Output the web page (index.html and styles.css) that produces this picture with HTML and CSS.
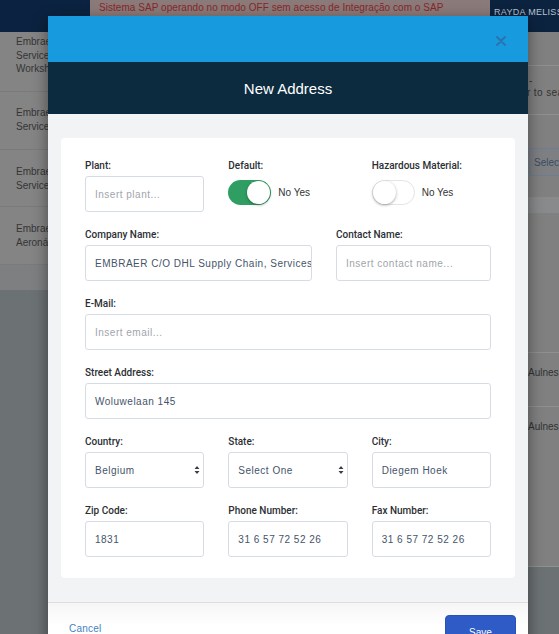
FILE: index.html
```html
<!DOCTYPE html>
<html lang="en">
<head>
<meta charset="utf-8">
<title>New Address</title>
<link rel="stylesheet" href="styles.css">
</head>
<body>
<div class="page">
  <header class="topbar">
    <div class="brand"></div>
    <div class="alert">Sistema SAP operando no modo OFF sem acesso de Integração com o SAP</div>
    <div class="user">RAYDA MELISSA</div>
  </header>
  <div class="content">
    <div class="list">
      <div class="lrow lrow-1">Embraer<br>Services<br>Workshop</div>
      <div class="lrow lrow-2">Embraer<br>Services</div>
      <div class="lrow lrow-3">Embraer<br>Services</div>
      <div class="lrow lrow-4">Embraer<br>Aeronáutica</div>
      <div class="lrow lrow-5"></div>
    </div>
    <div class="side">
      <div class="srow srow-1"></div>
      <div class="srow srow-2"><span class="dash">-</span><span>or to search</span></div>
      <div class="srow srow-3"><span class="selbox">Select</span></div>
      <div class="sband"></div>
      <div class="srow srow-a"></div>
      <div class="srow srow-b">Aulnes</div>
      <div class="srow srow-c">Aulnes</div>
    </div>
  </div>
</div>

<div class="modal">
  <div class="m-top">
    <svg class="close" width="10" height="10" viewBox="0 0 10 10"><path d="M1 1 L9 9 M9 1 L1 9" stroke="#2a74ae" stroke-width="1.9" stroke-linecap="round"/></svg>
  </div>
  <div class="m-title">New Address</div>
  <div class="m-body">
    <div class="card">
      <div class="frow cols3">
        <div class="field">
          <div class="label">Plant:</div>
          <div class="input ph">Insert plant...</div>
        </div>
        <div class="field">
          <div class="label">Default:</div>
          <div class="toggle-line">
            <span class="toggle on"><span class="knob"></span></span>
            <span class="yn">No Yes</span>
          </div>
        </div>
        <div class="field">
          <div class="label">Hazardous Material:</div>
          <div class="toggle-line">
            <span class="toggle off"><span class="knob"></span></span>
            <span class="yn">No Yes</span>
          </div>
        </div>
      </div>
      <div class="frow cols2">
        <div class="field">
          <div class="label">Company Name:</div>
          <div class="input">EMBRAER C/O DHL Supply Chain, Services</div>
        </div>
        <div class="field">
          <div class="label">Contact Name:</div>
          <div class="input ph">Insert contact name...</div>
        </div>
      </div>
      <div class="frow">
        <div class="field">
          <div class="label">E-Mail:</div>
          <div class="input ph">Insert email...</div>
        </div>
      </div>
      <div class="frow">
        <div class="field">
          <div class="label">Street Address:</div>
          <div class="input">Woluwelaan 145</div>
        </div>
      </div>
      <div class="frow cols3">
        <div class="field">
          <div class="label">Country:</div>
          <div class="input select">Belgium<svg class="arrows" width="6" height="10" viewBox="0 0 6 10"><path d="M3 1 L5.5 4 H0.5 Z M3 9 L0.5 6 H5.5 Z" fill="#3a3f46"/></svg></div>
        </div>
        <div class="field">
          <div class="label">State:</div>
          <div class="input select">Select One<svg class="arrows" width="6" height="10" viewBox="0 0 6 10"><path d="M3 1 L5.5 4 H0.5 Z M3 9 L0.5 6 H5.5 Z" fill="#3a3f46"/></svg></div>
        </div>
        <div class="field">
          <div class="label">City:</div>
          <div class="input">Diegem Hoek</div>
        </div>
      </div>
      <div class="frow cols3">
        <div class="field">
          <div class="label">Zip Code:</div>
          <div class="input">1831</div>
        </div>
        <div class="field">
          <div class="label">Phone Number:</div>
          <div class="input">31 6 57 72 52 26</div>
        </div>
        <div class="field">
          <div class="label">Fax Number:</div>
          <div class="input">31 6 57 72 52 26</div>
        </div>
      </div>
    </div>
  </div>
  <div class="m-foot">
    <a class="cancel">Cancel</a>
    <button class="save">Save</button>
  </div>
</div>
</body>
</html>
```

FILE: styles.css
```css
* { box-sizing: border-box; }
html, body { margin: 0; padding: 0; }
body {
  width: 559px;
  height: 634px;
  overflow: hidden;
  font-family: "Liberation Sans", Arial, sans-serif;
  background: #6c7174;
  position: relative;
}

/* background page (already dimmed by the overlay) */
.page { width: 559px; }
.topbar { display: flex; height: 32px; }
.brand { width: 90px; background: #0b2340; }
.alert {
  width: 400px;
  height: 16px;
  background: #8b7a7a;
  color: #8a2727;
  font-size: 10px;
  letter-spacing: 0.05px;
  padding: 2px 0 0 9px;
  white-space: nowrap;
  overflow: hidden;
}
.user {
  flex: 1;
  background: #0c2340;
  color: #b9c3d0;
  font-size: 9px;
  letter-spacing: 0.3px;
  padding: 7px 0 0 4px;
  white-space: nowrap;
  overflow: hidden;
}
.content { display: flex; }
.list { width: 528px; }
.lrow {
  background: #848484;
  color: #353535;
  font-size: 10px;
  line-height: 13.5px;
  padding-left: 16px;
  border-bottom: 1px solid #7a7a7a;
  white-space: nowrap;
}
.lrow-1 { height: 60px; padding-top: 3px; }
.lrow-2 { height: 58px; padding-top: 14px; }
.lrow-3 { height: 57px; padding-top: 15px; }
.lrow-4 { height: 58px; padding-top: 15px; }
.lrow-5 { height: 25px; background: #7e7f80; border-bottom: 0; }

.side { flex: 1; overflow: hidden; white-space: nowrap; font-size: 10px; color: #333; }
.srow { background: #808080; border-bottom: 1px solid #8f9090; }
.srow-1 { height: 34px; }
.srow-2 { height: 49px; padding: 9px 0 0 0; display: flex; flex-direction: column; line-height: 12px; }
.srow-2 .dash { padding-left: 1px; }
.srow-2 span:last-child { margin-left: -7px; letter-spacing: .4px; }
.srow-3 { height: 82px; padding-top: 33px; border-bottom: 0; }
.selbox {
  display: inline-block;
  margin-left: 1px;
  padding: 8px 4px 7px 4px;
  border: 1px solid #6d7d95;
  border-radius: 2px;
  color: #3c4d66;
  background: #7e7f82;
}
.sband { height: 16px; background: #898a8b; }
.srow-a { height: 140px; }
.srow-b { height: 54px; padding-top: 14px; }
.srow-c { height: 160px; padding-top: 14px; }

/* modal */
.modal {
  position: absolute;
  left: 48px;
  top: 16px;
  width: 480px;
  display: flex;
  flex-direction: column;
  box-shadow: 0 4px 14px rgba(0,0,0,.45);
  background: #f2f3f5;
}
.m-top {
  height: 46px;
  background: #189ade;
  display: flex;
  justify-content: flex-end;
  align-items: center;
  padding: 4px 22px 0 0;
}
.m-title {
  height: 52px;
  background: #0c2b3f;
  color: #fff;
  font-size: 15px;
  display: flex;
  align-items: center;
  justify-content: center;
}
.m-body { padding: 24px 13px 24px 13px; background: #f2f3f5; }
.card {
  background: #fff;
  border-radius: 4px;
  padding: 21px 24px;
  display: flex;
  flex-direction: column;
  gap: 16px;
}
.frow { display: grid; grid-template-columns: 1fr; }
.cols3 { grid-template-columns: repeat(3, 1fr); column-gap: 24px; }
.cols2 { grid-template-columns: 227px 1fr; column-gap: 24px; }
.label {
  font-family: Roboto, "Liberation Sans", sans-serif;
  font-weight: 500;
  font-size: 10px;
  line-height: 14px;
  color: #2b2f34;
  margin-bottom: 3px;
  white-space: nowrap;
}
.input {
  height: 36px;
  border: 1px solid #d6dce6;
  border-radius: 3px;
  padding: 0 9px;
  display: flex;
  align-items: center;
  font-size: 10px;
  letter-spacing: 0.5px;
  color: #45546a;
  white-space: nowrap;
  overflow: hidden;
}
.input.ph { color: #a1a5ab; }
.select { justify-content: space-between; padding-right: 3px; }
.arrows { flex: none; }

.toggle-line { height: 32px; display: flex; align-items: center; gap: 7px; }
.toggle {
  width: 43px;
  height: 25px;
  border-radius: 13px;
  display: flex;
  align-items: center;
  padding: 1px;
}
.toggle.on { background: #2f9e62; justify-content: flex-end; }
.toggle.off { background: #fff; border: 1px solid #e4e4e4; padding: 0; }
.knob {
  width: 23px;
  height: 23px;
  border-radius: 50%;
  background: #fff;
  box-shadow: 0 1px 3px rgba(0,0,0,.35);
}
.yn { font-size: 10px; color: #333; }

.m-foot {
  border-top: 1px solid #dcdee2;
  background: linear-gradient(#f5f5f6, #ffffff 22px);
  height: 60px;
  display: flex;
  justify-content: space-between;
  align-items: flex-start;
  padding: 12px 12px 0 21px;
}
.cancel {
  font-size: 10px;
  color: #3f83c2;
  margin-top: 8px;
  letter-spacing: 0.2px;
}
.save {
  width: 71px;
  height: 34px;
  background: #2f5bc7;
  border: 1px solid #2a51b4;
  border-radius: 4px;
  color: #fff;
  font-family: "Liberation Sans", Arial, sans-serif;
  font-size: 10px;
  padding: 0;
}
```
